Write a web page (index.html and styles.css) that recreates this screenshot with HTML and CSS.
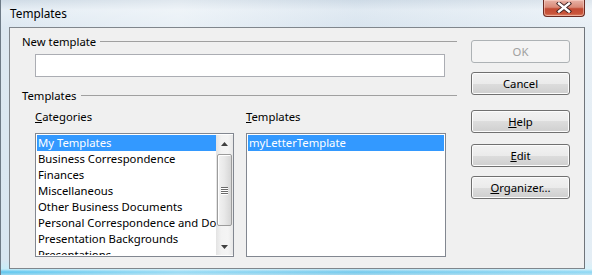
FILE: index.html
```html
<!DOCTYPE html>
<html>
<head>
<meta charset="utf-8">
<link rel="stylesheet" href="styles.css">
</head>
<body>
<div class="window">
  <div class="titlebar">
    <span class="title">Templates</span>
    <div class="close">
      <svg width="18" height="11" viewBox="0 0 18 11">
        <path d="M4 1.5 L14 9.5 M14 1.5 L4 9.5" stroke="#3b2020" stroke-width="4.2" stroke-linecap="square"/>
        <path d="M4 1.5 L14 9.5 M14 1.5 L4 9.5" stroke="#ffffff" stroke-width="2.4" stroke-linecap="square"/>
      </svg>
    </div>
  </div>
  <div class="client">
    <div class="main">
      <div class="group-head"><span>New template</span><i class="rule"></i></div>
      <div class="input"></div>
      <div class="group-head second"><span>Templates</span><i class="rule"></i></div>
      <div class="lists">
        <div class="col left">
          <div class="label"><u>C</u>ategories</div>
          <div class="listbox">
            <div class="items">
              <div class="item sel">My Templates</div>
              <div class="item">Business Correspondence</div>
              <div class="item">Finances</div>
              <div class="item">Miscellaneous</div>
              <div class="item">Other Business Documents</div>
              <div class="item">Personal Correspondence and Documents</div>
              <div class="item">Presentation Backgrounds</div>
              <div class="item">Presentations</div>
            </div>
            <div class="scrollbar">
              <div class="arrow up"><svg width="7" height="4" viewBox="0 0 7 4"><path d="M0 4 L3.5 0 L7 4 Z" fill="#404040"/></svg></div>
              <div class="track">
                <div class="thumb">
                  <div class="grip"><i></i><i></i><i></i><i></i></div>
                </div>
              </div>
              <div class="arrow down"><svg width="7" height="4" viewBox="0 0 7 4"><path d="M0 0 L7 0 L3.5 4 Z" fill="#404040"/></svg></div>
            </div>
          </div>
        </div>
        <div class="col right">
          <div class="label"><u>T</u>emplates</div>
          <div class="listbox plain">
            <div class="items">
              <div class="item sel">myLetterTemplate</div>
            </div>
          </div>
        </div>
      </div>
    </div>
    <div class="buttons">
      <div class="btn disabled">OK</div>
      <div class="btn">Cancel</div>
      <div class="btn gap1"><span><u>H</u>elp</span></div>
      <div class="btn gap2"><span><u>E</u>dit</span></div>
      <div class="btn"><span><u>O</u>rganizer...</span></div>
    </div>
  </div>
</div>
</body>
</html>
```
FILE: styles.css
```css
html, body {
  margin: 0;
  padding: 0;
}
body {
  width: 592px;
  height: 275px;
  overflow: hidden;
  font-family: "Noto Sans", "Open Sans", sans-serif;
  font-size: 11.3px;
  color: #000;
}
.window {
  width: 592px;
  height: 275px;
  box-sizing: border-box;
  background:
    linear-gradient(90deg, rgba(255,255,255,0.0), rgba(255,255,255,0.35) 30%, rgba(200,215,230,0.2) 60%, rgba(255,255,255,0.3)),
    linear-gradient(180deg, #cfdbe6 0px, #e6eef5 10px, #dde8f1 27px, #d8e6f1 260px, #c7ecf8 269px, #5cc6ef 272px, #9fd9ef 275px);
  border-left: 1px solid #6d7a86;
  padding: 0 7px 0 8px;
  display: flex;
  flex-direction: column;
}
.titlebar {
  height: 27px;
  display: flex;
  justify-content: space-between;
  align-items: flex-start;
}
.title {
  padding: 5px 0 0 1px;
  line-height: 16px;
  font-size: 11.8px;
  color: #000;
}
.close {
  width: 42px;
  height: 17px;
  box-sizing: border-box;
  border: 1px solid #6b2a22;
  border-top: none;
  border-radius: 0 0 4px 4px;
  background: linear-gradient(180deg, #e8b3a7 0%, #d98a78 45%, #c24a33 55%, #c9553b 85%, #de8a6c 100%);
  box-shadow: inset 0 0 0 1px rgba(255,220,210,0.5);
  display: flex;
  align-items: center;
  justify-content: center;
}
.close svg { display: block; margin-top: -1px; }
.client {
  width: 576px;
  height: 242px;
  box-sizing: border-box;
  background: #f0f0f0;
  border: 1px solid #80868c;
  border-right-color: #6f747a;
  padding: 6px 0 0 12px;
  display: flex;
}
.main {
  width: 435px;
  display: flex;
  flex-direction: column;
}
.group-head {
  display: flex;
  align-items: center;
  height: 16px;
  line-height: 16px;
}
.group-head .rule {
  flex: 1;
  height: 1px;
  background: #a0a0a0;
  margin: 0 0 1px 4px;
}
.group-head.second { margin-top: 11px; }
.input {
  margin: 4px 0 0 13px;
  width: 410px;
  height: 23px;
  box-sizing: border-box;
  border: 1px solid #abadb3;
  background: #fff;
}
.lists {
  margin: 5px 0 0 13px;
  display: flex;
  gap: 12px;
}
.col { display: flex; flex-direction: column; }
.col.left { width: 199px; }
.col.right { width: 200px; }
.label {
  height: 16px;
  line-height: 16px;
  margin-bottom: 8px;
}
.listbox {
  height: 124px;
  box-sizing: border-box;
  border: 1px solid #828790;
  background: #fff;
  display: flex;
  padding: 1px 0 1px 1px;
  overflow: hidden;
}
.listbox.plain { padding: 1px; }
.items {
  flex: 1;
  overflow: hidden;
  min-width: 0;
}
.item {
  height: 16px;
  line-height: 16px;
  padding-left: 1px;
  white-space: nowrap;
  overflow: hidden;
}
.item.sel {
  background: #3399ff;
  color: #fff;
}
.scrollbar {
  width: 17px;
  display: flex;
  flex-direction: column;
  background: linear-gradient(90deg, #e3e3e3, #f2f2f2 30%, #f4f4f4 70%, #e8e8e8);
}
.arrow {
  height: 17px;
  display: flex;
  align-items: center;
  justify-content: center;
}
.track {
  flex: 1;
  padding: 2px 1px;
  display: flex;
  flex-direction: column;
}
.thumb {
  height: 72px;
  box-sizing: border-box;
  border: 1px solid #9c9c9c;
  border-radius: 2px;
  background: linear-gradient(90deg, #f3f3f3, #e8e8e8 50%, #d6d6d6);
  box-shadow: inset 1px 1px 0 #fff;
  display: flex;
  align-items: center;
  justify-content: center;
}
.grip {
  display: flex;
  flex-direction: column;
  gap: 1px;
}
.grip i {
  display: block;
  width: 7px;
  height: 1px;
  background: #6a6a6a;
  box-shadow: 0 1px 0 #fff;
}
.buttons {
  width: 99px;
  margin-left: 14px;
  padding-top: 6px;
  display: flex;
  flex-direction: column;
}
.btn {
  height: 23px;
  box-sizing: border-box;
  border: 1px solid #707070;
  border-radius: 3px;
  background: linear-gradient(180deg, #f2f2f2 0%, #ebebeb 50%, #dddddd 50%, #cfcfcf 100%);
  box-shadow: inset 0 0 0 1px #fcfcfc;
  display: flex;
  align-items: center;
  justify-content: center;
  line-height: 16px;
  margin-bottom: 9px;
}
.btn.disabled {
  color: #a0a0a0;
  border-color: #adb2b5;
  background: #f4f4f4;
  box-shadow: none;
}
.btn.gap1 { margin-top: 6px; margin-bottom: 11px; }
.btn.gap2 { margin-bottom: 9px; }
```
